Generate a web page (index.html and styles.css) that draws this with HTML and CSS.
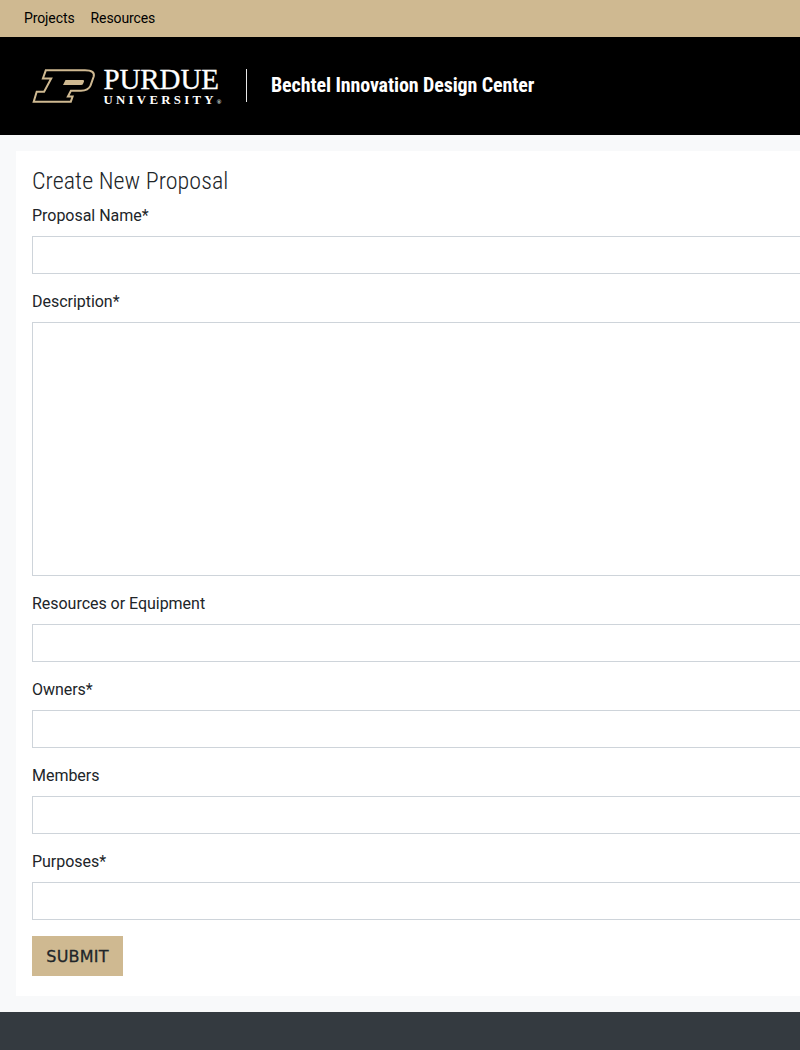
FILE: index.html
```html
<!DOCTYPE html>
<html lang="en">
<head>
<meta charset="UTF-8">
<meta name="viewport" content="width=device-width, initial-scale=1.0">
<title>Create New Proposal</title>
<link rel="stylesheet" href="styles.css">
</head>
<body>
<div class="page">
  <nav class="topbar">
    <a href="#">Projects</a>
    <a href="#">Resources</a>
  </nav>

  <header class="masthead">
    <a class="brand" href="#">
      <svg class="brand-mark" width="64" height="36" viewBox="0 0 64 36" aria-hidden="true">
        <path class="mark-outline" d="M13.800 2.300 H53 Q63.300 2.300 61.700 8.500 L58.500 17.700 Q56.300 22.700 49 22.700 H38.900 L35.900 28.500 H40.600 L38.800 33.700 H1.700 L4.700 23.700 H12.100 L19.200 10.500 H10.900 Z"/>
        <path class="mark-bowl" d="M33.500 12 H51 Q52.500 12 52 13.500 L51.200 15.500 Q50.700 17 49 17 H31 Z"/>
      </svg>
      <span class="wordmark">
        <span class="wordmark-top">PURDUE</span>
        <span class="wordmark-bottom">UNIVERSITY<sup>®</sup></span>
      </span>
    </a>
    <span class="site-title">Bechtel Innovation Design Center</span>
  </header>

  <main class="content">
    <form class="card">
      <h1>Create New Proposal</h1>

      <div class="field">
        <label for="name">Proposal Name*</label>
        <input id="name" type="text">
      </div>
      <div class="field">
        <label for="description">Description*</label>
        <textarea id="description"></textarea>
      </div>
      <div class="field">
        <label for="resources">Resources or Equipment</label>
        <input id="resources" type="text">
      </div>
      <div class="field">
        <label for="owners">Owners*</label>
        <input id="owners" type="text">
      </div>
      <div class="field">
        <label for="members">Members</label>
        <input id="members" type="text">
      </div>
      <div class="field">
        <label for="purposes">Purposes*</label>
        <input id="purposes" type="text">
      </div>

      <button type="button">SUBMIT</button>
    </form>
  </main>

  <footer class="footer"></footer>
</div>
</body>
</html>
```

FILE: styles.css
```css
html, body {
  margin: 0;
  padding: 0;
  overflow: hidden;
}
body {
  font-family: Roboto, "Liberation Sans", sans-serif;
  font-size: 16px;
  line-height: 1.5;
  color: #212529;
  background-color: #f8f9fa;
}
.page {
  width: 1200px;
}
.topbar {
  display: flex;
  padding: 8px 16px;
  background-color: #cfb991;
  font-size: 14px;
  letter-spacing: -0.1px;
}
.topbar a {
  padding: 0 8px;
  color: #000;
  text-decoration: none;
}
.masthead {
  display: flex;
  align-items: center;
  height: 96px;
  padding: 0 0 2px 32px;
  background-color: #000;
}
.brand {
  display: flex;
  align-items: flex-start;
  gap: 7.5px;
  padding-right: 24.5px;
  border-right: 1px solid #e8e8e8;
  height: 33px;
  color: #fff;
  text-decoration: none;
}
.brand-mark {
  display: block;
  margin-top: -1px;
}
.mark-outline {
  fill: #000;
  stroke: #cfb991;
  stroke-width: 2;
}
.mark-bowl {
  fill: #cfb991;
}
.wordmark {
  display: flex;
  flex-direction: column;
  width: 118px;
  margin-top: -1px;
  font-family: "Liberation Serif", serif;
}
.wordmark-top {
  font-size: 29px;
  line-height: 23px;
  letter-spacing: -0.1px;
  -webkit-text-stroke: 0.3px #fff;
}
.wordmark-bottom {
  margin-top: 3px;
  font-size: 12.8px;
  line-height: 12px;
  font-weight: bold;
  letter-spacing: 3.3px;
  white-space: nowrap;
}
.wordmark-bottom sup {
  font-size: 6px;
  letter-spacing: 0;
  line-height: 0;
  vertical-align: baseline;
}
.site-title {
  margin-left: 24px;
  font-size: 20px;
  font-weight: 700;
  font-stretch: 75%;
  letter-spacing: -0.1px;
  color: #fff;
}
.content {
  padding: 16px;
}
.card {
  padding: 16px 16px 20px;
  background-color: #fff;
}
h1 {
  margin: 0 0 8px;
  font-size: 24px;
  font-weight: 300;
  font-stretch: 75%;
  letter-spacing: 0.05px;
  line-height: 29px;
}
.field {
  margin-bottom: 16px;
}
label {
  display: block;
  margin-bottom: 8px;
  letter-spacing: -0.03px;
}
input, textarea {
  display: block;
  box-sizing: border-box;
  width: 100%;
  height: 38px;
  padding: 6px 12px;
  background: #fff;
  border: 1px solid #ced4da;
  border-radius: 0;
  resize: none;
}
textarea {
  height: 254px;
}
button {
  display: block;
  width: 91px;
  height: 40px;
  padding: 0;
  background-color: #cfb991;
  color: #212529;
  border: none;
  cursor: pointer;
  font-family: "DejaVu Sans", sans-serif;
  font-size: 16px;
  letter-spacing: 0.2px;
  -webkit-text-stroke: 0.3px #212529;
}
.footer {
  height: 38px;
  background-color: #343a40;
}
```
